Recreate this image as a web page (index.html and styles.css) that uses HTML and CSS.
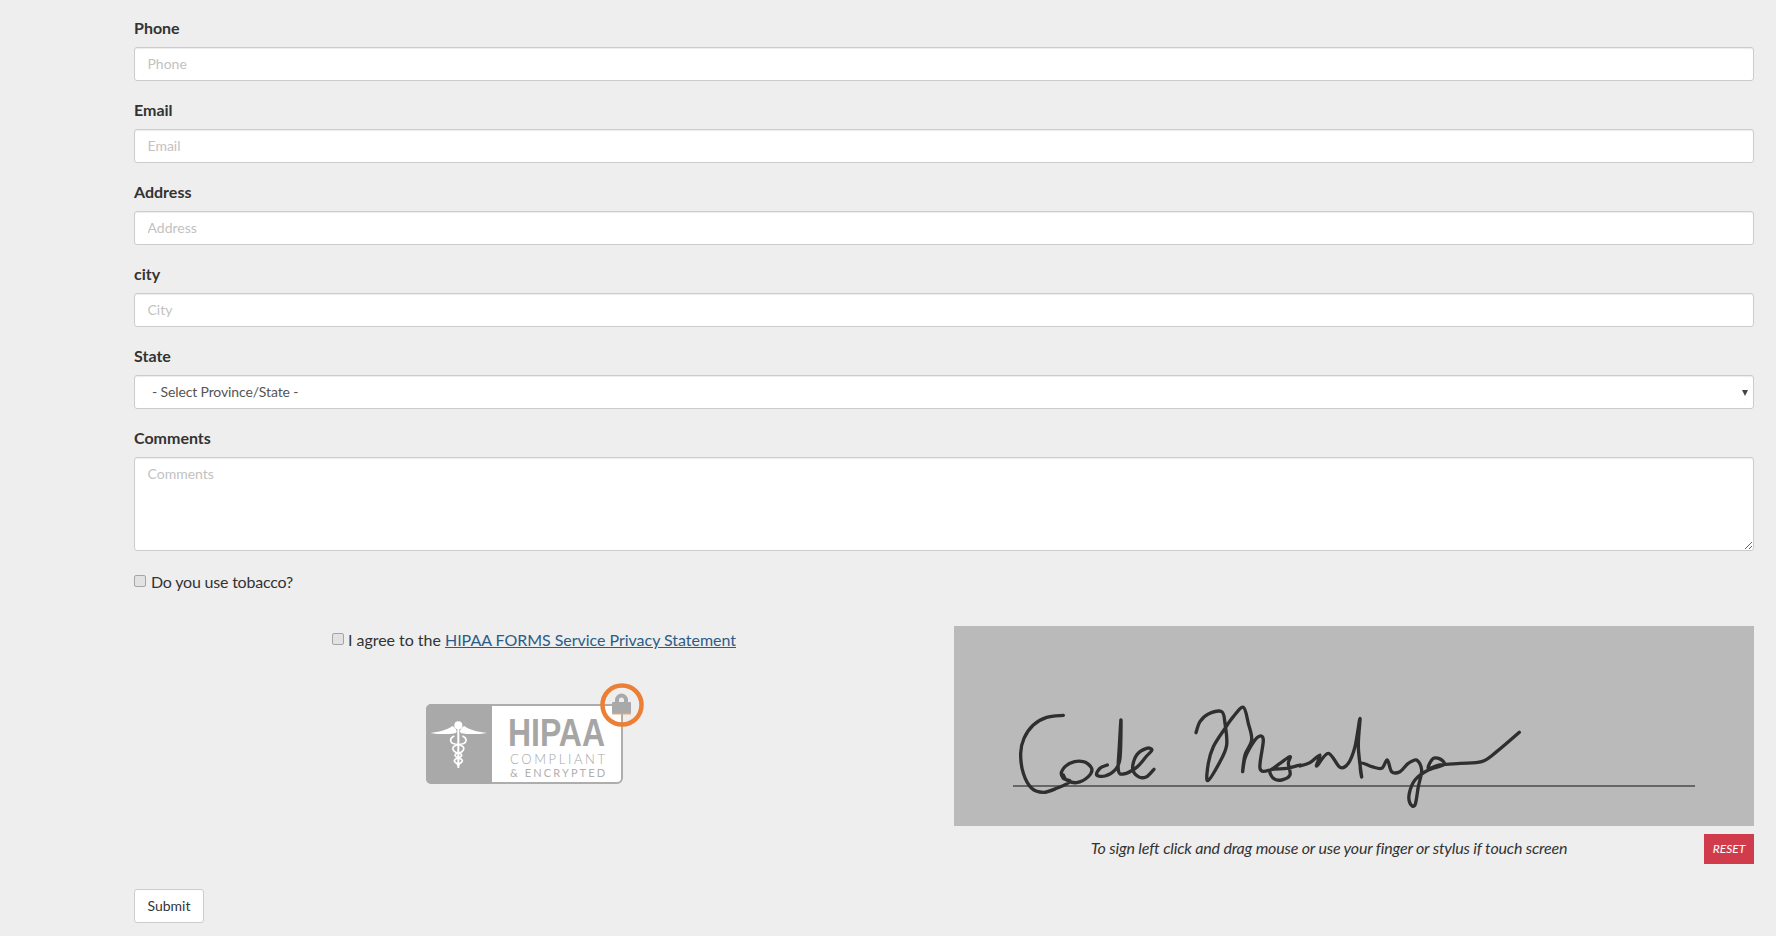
FILE: index.html
```html
<!DOCTYPE html>
<html>
<head>
  <link rel="stylesheet" href="styles.css">
</head>
<body>
  <form class="form-page" onsubmit="return false;">
    <div class="form-group">
      <label for="phone">Phone</label>
      <input type="text" id="phone" class="form-control" placeholder="Phone">
    </div>
    <div class="form-group">
      <label for="email">Email</label>
      <input type="text" id="email" class="form-control" placeholder="Email">
    </div>
    <div class="form-group">
      <label for="address">Address</label>
      <input type="text" id="address" class="form-control" placeholder="Address">
    </div>
    <div class="form-group">
      <label for="city">city</label>
      <input type="text" id="city" class="form-control" placeholder="City">
    </div>
    <div class="form-group">
      <label for="state">State</label>
      <div class="select-wrap">
        <select id="state" class="form-control state-select">
          <option>- Select Province/State -</option>
        </select>
      </div>
    </div>
    <div class="form-group">
      <label for="comments">Comments</label>
      <textarea id="comments" class="form-control comments" placeholder="Comments"></textarea>
    </div>

    <div class="check-row">
      <input type="checkbox" id="tobacco" class="check">
      <span class="tobacco-text">Do you use tobacco?</span>
    </div>

    <div class="agree-row">
      <div class="agree-col">
        <div class="agree-line">
          <input type="checkbox" id="agree" class="check">
          <span>I agree to the <a href="#">HIPAA FORMS Service Privacy Statement</a></span>
        </div>
        <svg class="hipaa-badge" width="220" height="102" viewBox="0 0 220 102">
          <!-- badge body -->
          <rect x="1" y="22" width="195" height="78" rx="5" fill="#fff" stroke="#adadad" stroke-width="2"/>
          <path d="M5 21H66V101H5A5 5 0 0 1 0 96V26A5 5 0 0 1 5 21Z" fill="#a9a9a9"/>
          <!-- caduceus -->
          <g transform="translate(-1 27) scale(.3333)" fill="#fff">
            <circle cx="100" cy="46" r="12"/>
            <path d="M16 69C40 66 66 60 82 48C90 52 94 58 95 64C96 72 80 72 60 72C44 72 28 72 16 69Z"/>
            <path d="M186 69C162 66 134 60 118 48C110 52 106 58 105 64C104 72 120 72 140 72C156 72 172 72 186 69Z"/>
            <rect x="97" y="56" width="6" height="118"/>
            <g fill="none" stroke="#fff" stroke-width="5">
              <path d="M88 78C72 84 74 100 90 102C110 104 124 112 112 124C104 132 90 128 90 136C90 144 110 142 112 152C112 160 100 160 96 166"/>
              <path d="M112 78C128 84 126 100 110 102C90 104 76 112 88 124C96 132 110 128 110 136C110 144 90 142 88 152C88 160 100 160 104 166"/>
            </g>
          </g>
          <!-- wordmark -->
          <text class="badge-title" x="82" y="63" textLength="97" lengthAdjust="spacingAndGlyphs">HIPAA</text>
          <text class="badge-sub" x="84" y="81" textLength="95">COMPLIANT</text>
          <text class="badge-sub small" x="84" y="94" textLength="95">&amp; ENCRYPTED</text>
          <!-- lock -->
          <path d="M191 20V17A4.500 4.500 0 0 1 200 17V20" fill="none" stroke="#a9a9a9" stroke-width="4"/>
          <rect x="186" y="19" width="19" height="12" rx="1" fill="#a9a9a9"/>
          <path d="M186 31H205" stroke="#e9a878" stroke-width="1"/>
          <circle cx="196" cy="22" r="19.500" fill="none" stroke="#ec7f36" stroke-width="4.500"/>
        </svg>
      </div>
      <div class="sign-col">
        <svg class="sign-pad" width="800" height="200" viewBox="0 0 800 200">
          <path d="M59 160H741" stroke="#666" stroke-width="2"/>
          <g class="ink" transform="translate(-4 54) scale(.3333)">
            <path d="M340 106L290 112L250 135L222 175L212 220L220 280L245 325L280 337L320 325L360 305L340 295L335 275L360 250L400 245L425 265L415 290L380 308L350 300L340 285"/>
            <path d="M472 255L450 265L440 285L465 288L495 270L510 235L513 120L508 200L505 270L520 282L560 262L590 228L606 210L590 205L560 225L548 265L565 290L590 290L612 268"/>
          </g>
          <g class="ink" transform="translate(226 64) scale(.3333)">
            <path d="M48 128L60 95L85 72L125 65L135 100L140 165L120 215L83 272L85 220L100 170L135 115L160 80L190 52L205 100L215 150L195 195L188 245L195 205L215 165L235 140L250 150L240 235L270 240L300 220L330 200L325 220L330 255L305 270L280 265L272 240L320 235L360 225"/>
          </g>
          <g class="ink" transform="translate(346 54) scale(.3333)">
            <path d="M0 258L30 248L60 225L50 258L85 220L120 262L145 250L165 200L180 115L175 200L185 290L182 250L215 260L245 265L262 240L275 275L300 275L325 250L350 240L365 270L355 320L345 375L330 370L328 340L345 300L385 270L430 255L425 240L400 235L385 265L420 255L480 250L545 245L590 215L658 157"/>
          </g>
        </svg>
        <div class="sign-foot">
          <em class="sign-hint">To sign left click and drag mouse or use your finger or stylus if touch screen</em>
          <button class="btn-reset">RESET</button>
        </div>
      </div>
    </div>

    <button class="btn-submit">Submit</button>
  </form>
  <script src="script.js"></script>
</body>
</html>
```

FILE: styles.css
```css
html, body {
  margin: 0;
  height: 936px;
  overflow: hidden;
}

body {
  background-color: #eee;
  color: #333;
  font-family: "Lato", "Liberation Sans", sans-serif;
  font-size: 16px;
  line-height: 1.42857;
}

.form-page {
  padding: 16px 22px 0 134px;
}

.form-group {
  margin-bottom: 17px;
}

label {
  display: block;
  margin-bottom: 8px;
  font-weight: 700;
  line-height: 23px;
}

.form-control {
  display: block;
  box-sizing: border-box;
  width: 100%;
  height: 34px;
  padding: 6px 12.5px;
  background-color: #fff;
  border: 1px solid #ccc;
  border-radius: 3px;
  box-shadow: inset 0 1px 1px rgba(0, 0, 0, .075);
  color: #555;
  font-family: inherit;
  font-size: 14px;
  line-height: 1.42857;
}

input.form-control {
  padding-bottom: 8px;
}

.form-control::placeholder {
  color: #c2c2c2;
  opacity: 1;
}

.select-wrap {
  position: relative;
}

.select-wrap::after {
  content: "";
  position: absolute;
  right: 6px;
  top: 15px;
  border-left: 3px solid transparent;
  border-right: 3px solid transparent;
  border-top: 6px solid #444;
}

.state-select {
  appearance: none;
  padding-left: 17px;
  letter-spacing: -.13px;
}

.comments {
  height: 94px;
  padding-top: 6px;
}

.check-row {
  display: flex;
  align-items: center;
  gap: 5px;
  margin-top: 20px;
}

.tobacco-text {
  letter-spacing: -.2px;
}

.check {
  appearance: none;
  box-sizing: border-box;
  flex: none;
  width: 12px;
  height: 12px;
  margin: -2px 0 0;
  background-color: #e2e2e2;
  border: 1px solid #a5a5a5;
  border-radius: 2px;
}

.agree-row {
  display: flex;
  gap: 18px;
  margin-top: 32px;
}

.agree-col {
  display: flex;
  flex-direction: column;
  align-items: center;
  width: 802px;
}

.agree-line {
  display: flex;
  align-items: center;
  gap: 4px;
  margin: 3px 2px 0 0;
  letter-spacing: -.03px;
}

a {
  color: #2b5c87;
}

.hipaa-badge {
  display: block;
  margin: 31px 0 0 2px;
}

.badge-title {
  fill: #a6a6a6;
  font-family: "Liberation Sans", sans-serif;
  font-size: 39px;
  font-weight: 700;
}

.badge-sub {
  fill: #a6a6a6;
  font-family: "Lato", sans-serif;
  font-size: 13px;
  font-weight: 300;
}

.badge-sub.small {
  fill: #b0b0b0;
  font-size: 11px;
  font-weight: 400;
}

.sign-col {
  width: 800px;
}

.sign-pad {
  display: block;
  background-color: #bababa;
}

.ink path {
  fill: none;
  stroke: #2f2f2f;
  stroke-width: 10;
  stroke-linejoin: round;
  stroke-linecap: round;
}

.sign-foot {
  display: flex;
  align-items: center;
  margin-top: 8px;
}

.sign-hint {
  flex: 1;
  text-align: center;
  letter-spacing: -.18px;
}

.btn-reset {
  width: 50px;
  height: 30px;
  padding: 0;
  background-color: #d03c4c;
  border: none;
  color: #fff;
  font-family: inherit;
  font-size: 12px;
  font-style: italic;
}

.btn-submit {
  display: block;
  height: 34px;
  margin-top: 25px;
  padding: 6px 12.5px;
  background-color: #fff;
  border: 1px solid #ccc;
  border-radius: 3px;
  color: #333;
  font-family: inherit;
  font-size: 14px;
  line-height: 1.42857;
}
```

FILE: script.js
```js
// Smooth the signature strokes: turn each straight-line path into a curve through the same points
document.querySelectorAll('.ink path').forEach(function (path) {
  var pts = path.getAttribute('d').slice(1).split('L').map(function (pair) {
    return pair.split(' ').map(Number);
  });
  var d = 'M' + pts[0].join(' ');
  for (var i = 0; i < pts.length - 1; i++) {
    var p0 = pts[i - 1] || pts[i];
    var p1 = pts[i];
    var p2 = pts[i + 1];
    var p3 = pts[i + 2] || p2;
    d += 'C' + (p1[0] + (p2[0] - p0[0]) / 6) + ' ' + (p1[1] + (p2[1] - p0[1]) / 6) + ' ' +
      (p2[0] - (p3[0] - p1[0]) / 6) + ' ' + (p2[1] - (p3[1] - p1[1]) / 6) + ' ' +
      p2[0] + ' ' + p2[1];
  }
  path.setAttribute('d', d);
});
```
